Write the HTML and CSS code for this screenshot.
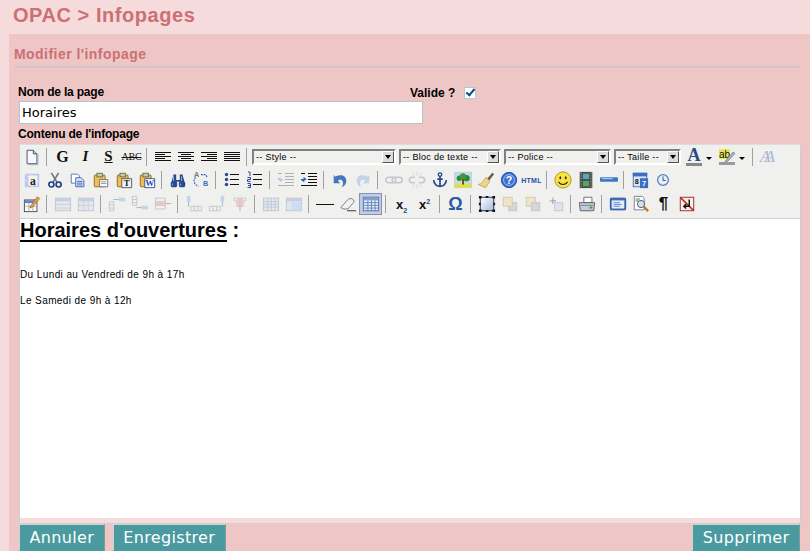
FILE: index.html
```html
<!DOCTYPE html>
<html lang="fr">
<head>
    <meta charset="UTF-8">
    <title>OPAC &gt; Infopages</title>
    <link rel="stylesheet" href="styles.css">
</head>
<body>

<svg class="defs" width="0" height="0">
    <symbol id="i-new" viewBox="0 0 20 20"><path d="M4.500 2.500h7l4 4v11h-11z" fill="#f4f7fb" stroke="#3c4a60"/><path d="M11.500 2.500v4h4" fill="#b9c8de" stroke="#3c4a60"/><path d="M16.500 7v11.500H6" fill="none" stroke="#9aa4b4"/></symbol>
    <symbol id="i-left" viewBox="0 0 20 20"><path d="M2 5.500h16M2 7.500h10M2 9.500h16M2 11.500h10M2 13.500h16" stroke="#111"/></symbol>
    <symbol id="i-center" viewBox="0 0 20 20"><path d="M2 5.500h16M5 7.500h10M2 9.500h16M5 11.500h10M2 13.500h16" stroke="#111"/></symbol>
    <symbol id="i-right" viewBox="0 0 20 20"><path d="M2 5.500h16M8 7.500h10M2 9.500h16M8 11.500h10M2 13.500h16" stroke="#111"/></symbol>
    <symbol id="i-full" viewBox="0 0 20 20"><path d="M2 5.500h16M2 7.500h16M2 9.500h16M2 11.500h16M2 13.500h16" stroke="#111"/></symbol>
    <symbol id="i-cut" viewBox="0 0 20 20"><path d="M6 2l6 10M14 2L8 12" stroke="#6e7680" stroke-width="1.800"/><circle cx="6" cy="15" r="2.800" fill="none" stroke="#1e3c8a" stroke-width="1.800"/><circle cx="14" cy="15" r="2.800" fill="none" stroke="#1e3c8a" stroke-width="1.800"/></symbol>
    <symbol id="i-copy" viewBox="0 0 20 20"><path d="M2.500 3.500h7l2 2v8h-9z" fill="#fff" stroke="#4a70b0"/><path d="M7.500 7.500h6l3 3v7h-9z" fill="#dfe9fa" stroke="#3a60a8"/><path d="M9 11.500h6M9 13.500h6M9 15.500h6" stroke="#3a60a8"/></symbol>
    <symbol id="i-paste" viewBox="0 0 20 20"><rect x="2.500" y="4.500" width="12" height="13" rx="1" fill="#eebf50" stroke="#8a6a20"/><rect x="5.500" y="2.500" width="6" height="4" fill="#c9c9b5" stroke="#6a6a50"/><path d="M8.500 9.500h9v8h-9z" fill="#fff" stroke="#667"/><path d="M10 12h6M10 14h6" stroke="#889"/></symbol>
    <symbol id="i-find" viewBox="0 0 20 20"><path d="M5 4h3v6h4V4h3l3 11h-6v-3H8v3H2z" fill="#27498f"/><rect x="2" y="12" width="7" height="6" rx="1.500" fill="#27498f"/><rect x="11" y="12" width="7" height="6" rx="1.500" fill="#27498f"/><path d="M5 6v5M14 6v5M4 14v2M13 14v2" stroke="#a8c0ec"/></symbol>
    <symbol id="i-ul" viewBox="0 0 20 20"><path d="M8 4.500h9M8 9.500h9M8 14.500h9" stroke="#111"/><circle cx="4.500" cy="4.500" r="1.700" fill="#2a4a90"/><circle cx="4.500" cy="9.500" r="1.700" fill="#2a4a90"/><circle cx="4.500" cy="14.500" r="1.700" fill="#2a4a90"/></symbol>
    <symbol id="i-ol" viewBox="0 0 20 20"><path d="M8 4.500h9M8 9.500h9M8 14.500h9" stroke="#111"/><path d="M3 2h2v4M2.500 7.500h3v2h-3v2h3M2.500 13.500h3v4h-3M3 15.500h2" fill="none" stroke="#2a4a90"/></symbol>
    <symbol id="i-outdent" viewBox="0 0 20 20"><path d="M9 3.500h9M9 6.500h9M9 9.500h9M9 12.500h9M2 15.500h16M2 3.500h4" stroke="#b0b0b0"/><path d="M7 9.500H2l2-2v4z" stroke="#b8c8e4" fill="#b8c8e4"/></symbol>
    <symbol id="i-indent" viewBox="0 0 20 20"><path d="M9 3.500h9M9 6.500h9M9 9.500h9M9 12.500h9M2 15.500h16M2 3.500h4" stroke="#111"/><path d="M2 9.500h5l-2-2v4z" stroke="#2a60c0" fill="#2a60c0"/></symbol>
    <symbol id="i-undo" viewBox="0 0 20 20"><path d="M6 5.500c6-2 11 0 11 5.500 0 3-2 5.500-5 7 2-3 2-7.500-1.500-8.500l-3 1 2.500 3H3V4.500l2 2z" fill="#4476bd"/></symbol>
    <symbol id="i-redo" viewBox="0 0 20 20"><path d="M14 5.500C8 3.500 3 5.500 3 11c0 3 2 5.500 5 7-2-3-2-7.500 1.500-8.500l3 1-2.500 3H17V4.500l-2 2z" fill="#c4d3e8"/></symbol>
    <symbol id="i-link" viewBox="0 0 20 20"><rect x="1" y="7" width="11" height="6" rx="3" fill="none" stroke="#c3c7cf" stroke-width="1.800"/><rect x="8" y="7" width="11" height="6" rx="3" fill="none" stroke="#c3c7cf" stroke-width="1.800"/></symbol>
    <symbol id="i-unlink" viewBox="0 0 20 20"><path d="M8 7H4.500a3 3 0 000 6H8M12 7h3.500a3 3 0 010 6H12" fill="none" stroke="#c3c7cf" stroke-width="1.800"/><path d="M10 1v4M10 15v4M5 2l2 3M15 2l-2 3M5 18l2-3M15 18l-2-3" stroke="#cdd0d8"/></symbol>
    <symbol id="i-anchor" viewBox="0 0 20 20"><circle cx="10" cy="4" r="2" fill="none" stroke="#234a8a" stroke-width="1.500"/><path d="M10 6v11M7 9h6M3 10c0 5 4 7 7 7s7-2 7-7" fill="none" stroke="#234a8a" stroke-width="1.900"/></symbol>
    <symbol id="i-image" viewBox="0 0 20 20"><rect x="0.500" y="1.500" width="19" height="17" fill="#bcdcf4" stroke="#ccc"/><rect x="1" y="14" width="18" height="4" fill="#e6e230"/><circle cx="6" cy="8" r="3" fill="#2f8a2f"/><circle cx="14" cy="8" r="3.500" fill="#2f8a2f"/><circle cx="10" cy="6" r="3.500" fill="#3f9a3f"/><path d="M10 9v6" stroke="#7a3a10" stroke-width="2"/></symbol>
    <symbol id="i-clean" viewBox="0 0 20 20"><path d="M11 9l6-7 2 1.500-6 7.500z" fill="#6a5a50"/><path d="M10 7l4.500 4-5 7.500-8-3.500c3.500-.5 5.500-4 8.500-8z" fill="#f0d680" stroke="#9a7f40" stroke-width=".6"/></symbol>
    <symbol id="i-smiley" viewBox="0 0 20 20"><circle cx="10" cy="10" r="9" fill="#f8e440" stroke="#a89020"/><ellipse cx="7" cy="7.500" rx="1" ry="1.700" fill="#222"/><ellipse cx="13" cy="7.500" rx="1" ry="1.700" fill="#222"/><path d="M5 12c2 4 8 4 10 0" fill="none" stroke="#222" stroke-width="1.200"/></symbol>
    <symbol id="i-film" viewBox="0 0 20 20"><rect x="3" y="1" width="14" height="18" fill="#4a4a44"/><rect x="6.500" y="3" width="7" height="6" fill="#5aa8c0"/><rect x="6.500" y="11" width="7" height="6" fill="#52a860"/><path d="M4.500 2v16M15.500 2v16" stroke="#ddd" stroke-dasharray="1 2"/></symbol>
    <symbol id="i-media" viewBox="0 0 20 20"><rect x="0" y="7" width="20" height="5" rx="1" fill="#3f78c4"/><path d="M2 8.500h12" stroke="#c8dcf6"/></symbol>
    <symbol id="i-time" viewBox="0 0 20 20"><circle cx="10" cy="10" r="6" fill="#e8eef8" stroke="#5a80b8" stroke-width="1.400"/><path d="M10 6v4.500h3" fill="none" stroke="#234a8a"/></symbol>
    <symbol id="i-edit" viewBox="0 0 20 20"><rect x="1.500" y="5.500" width="14" height="13" fill="#fff" stroke="#444"/><rect x="2" y="6" width="13" height="3" fill="#5a86c8"/><path d="M2 12.500h13M6.500 9v9M11 9v9" stroke="#aaa"/><path d="M8.500 12l7.500-10 2.500 2-8 9.500-3 1z" fill="#e8a040" stroke="#7a5020" stroke-width=".6"/></symbol>
    <symbol id="i-table-dim" viewBox="0 0 20 20"><rect x="1.500" y="3.500" width="17" height="14" fill="#e4e8ee" stroke="#bcc5d2"/><rect x="2" y="4" width="16" height="3" fill="#c4d0e2"/><path d="M2 10.500h16M2 14.500h16" stroke="#c8ced8"/></symbol>
    <symbol id="i-cell-dim" viewBox="0 0 20 20"><rect x="1.500" y="3.500" width="17" height="14" fill="#e4e8ee" stroke="#bcc5d2"/><rect x="2" y="4" width="16" height="3" fill="#c4d0e2"/><path d="M7.500 7v10M12.500 7v10M2 11.500h16" stroke="#c8ced8"/></symbol>
    <symbol id="i-row-a" viewBox="0 0 20 20"><path d="M1.500 7.500h5v10h-5zM1.500 11h5M1.500 14.500h5" fill="none" stroke="#c0c4cc"/><rect x="12" y="3" width="7" height="4" fill="#c4d4ea"/><path d="M6 5h6" stroke="#aab"/></symbol>
    <symbol id="i-row-b" viewBox="0 0 20 20"><path d="M1.500 1.500h5v10h-5zM1.500 5h5M1.500 8.500h5" fill="none" stroke="#c0c4cc"/><rect x="12" y="12" width="7" height="4" fill="#c4d4ea"/><path d="M6 14h6" stroke="#aab"/></symbol>
    <symbol id="i-row-c" viewBox="0 0 20 20"><path d="M1.500 3.500h11v12h-11zM1.500 7.500h11M1.500 11.500h11" fill="none" stroke="#c0c4cc"/><rect x="2" y="7.500" width="11" height="4" fill="#efc4c8"/><path d="M13 9.500h6" stroke="#aab"/></symbol>
    <symbol id="i-col-a" viewBox="0 0 20 20"><path d="M6.500 12.500h12v5h-12zM10.500 12.500v5M14.500 12.500v5" fill="none" stroke="#c0c4cc"/><rect x="2" y="1" width="4" height="7" fill="#c4d4ea"/><path d="M4 8v5" stroke="#aab"/></symbol>
    <symbol id="i-col-b" viewBox="0 0 20 20"><path d="M1.500 12.500h12v5h-12zM5.500 12.500v5M9.500 12.500v5" fill="none" stroke="#c0c4cc"/><rect x="14" y="1" width="4" height="7" fill="#c4d4ea"/><path d="M16 8v5" stroke="#aab"/></symbol>
    <symbol id="i-col-c" viewBox="0 0 20 20"><path d="M3.500 3.500h13v3h-3v6h-7v-6h-3z" fill="none" stroke="#c0c4cc"/><rect x="7" y="3.500" width="6" height="9" fill="#efc4c8"/><path d="M10 12v6" stroke="#aab"/></symbol>
    <symbol id="i-grid" viewBox="0 0 20 20"><rect x="1.500" y="3.500" width="17" height="14" fill="#e4e8ee" stroke="#bcc5d2"/><path d="M2 7.500h16M2 10.500h16M2 13.500h16M6.500 4v13M10.500 4v13M14.500 4v13" stroke="#c0c8d6"/></symbol>
    <symbol id="i-merge" viewBox="0 0 20 20"><rect x="1.500" y="3.500" width="17" height="14" fill="#e0e6f0" stroke="#bcc5d2"/><rect x="2" y="4" width="16" height="3" fill="#c4d0e2"/><rect x="7" y="8" width="11" height="9" fill="#cddcf2"/></symbol>
    <symbol id="i-hr" viewBox="0 0 20 20"><path d="M1 10.500h18" stroke="#111"/></symbol>
    <symbol id="i-eraser" viewBox="0 0 20 20"><path d="M2 14l8-9c1-1 3-1.500 5-.5s2 3 1 4l-6 7H5z" fill="#eef0f2" stroke="#555" stroke-width=".8"/><path d="M9 17.500h10" stroke="#222"/></symbol>
    <symbol id="i-table" viewBox="0 0 20 20"><rect x="1.500" y="2.500" width="17" height="15" fill="#e8eef8" stroke="#456fa8"/><rect x="2" y="3" width="16" height="3" fill="#7fa2d2"/><path d="M2 8.500h16M2 11.500h16M2 14.500h16M6.500 6v12M10.500 6v12M14.500 6v12" stroke="#5a82b8"/></symbol>
    <symbol id="i-box" viewBox="0 0 20 20"><rect x="2.500" y="2.500" width="15" height="15" fill="url(#boxfill)" stroke="#223"/><path d="M1 1h3v3H1zM16 1h3v3h-3zM1 16h3v3H1zM16 16h3v3h-3zM8.500 1h3v2h-3zM8.500 17h3v2h-3zM1 8.500h2v3H1zM17 8.500h2v3h-2z" fill="#112"/></symbol>
    <symbol id="i-front" viewBox="0 0 20 20"><rect x="8.500" y="8.500" width="9" height="9" fill="#d6d6d6" stroke="#c4c4c4"/><rect x="2.500" y="2.500" width="10" height="10" fill="#efe4c8" stroke="#d0c8b0"/></symbol>
    <symbol id="i-back" viewBox="0 0 20 20"><rect x="2.500" y="2.500" width="10" height="10" fill="#efe4c8" stroke="#d0c8b0"/><rect x="8.500" y="8.500" width="9" height="9" fill="#d6d6d6" stroke="#c4c4c4"/></symbol>
    <symbol id="i-move" viewBox="0 0 20 20"><rect x="8.500" y="8.500" width="9" height="9" fill="#dbe4f0" stroke="#bcc8d8"/><path d="M6.500 3v7M3 6.500h7" stroke="#999"/></symbol>
    <symbol id="i-print" viewBox="0 0 20 20"><path d="M6.500 2.500h9v6h-9z" fill="#fff" stroke="#667"/><path d="M1.500 8.500h17l-1 9h-15z" fill="#c4ccd8" stroke="#556"/><path d="M3 11.500h14" stroke="#778"/><rect x="13" y="13" width="3" height="2" fill="#2a9a3a"/></symbol>
    <symbol id="i-layer" viewBox="0 0 20 20"><rect x="1.500" y="3.500" width="17" height="13" rx="1" fill="#3a6fc0" stroke="#1f4a90"/><rect x="3" y="6" width="14" height="9" fill="#e4eefa"/><path d="M5 8.500h7M5 10.500h9M5 12.500h7" stroke="#5a86c8"/></symbol>
    <symbol id="i-preview" viewBox="0 0 20 20"><path d="M2.500 1.500h9l2 2v13h-11z" fill="#fff" stroke="#778"/><path d="M4 4.500h5M4 6.500h3" stroke="#3a8a3a"/><circle cx="10" cy="10" r="4" fill="#cfe0f4" stroke="#456"/><path d="M13 13l5 5" stroke="#c07820" stroke-width="2.600"/></symbol>
    <symbol id="i-noedit" viewBox="0 0 20 20"><rect x="2.500" y="2.500" width="15" height="15" fill="#f8f0e8" stroke="#a02020"/><path d="M3 3l14 14" stroke="#c82020" stroke-width="1.800"/><path d="M12.500 5v7.500H7M9 10l-2.500 2.500L9 15" fill="none" stroke="#111" stroke-width="1.600"/></symbol>
    <linearGradient id="boxfill" x2="1" y2="1"><stop offset="0" stop-color="#fff"/><stop offset="1" stop-color="#a4b8dc"/></linearGradient>
</svg>

<h1 class="page-title">OPAC &gt; Infopages</h1>

<form class="panel">
    <h3 class="panel-title">Modifier l'infopage</h3>

    <div class="form-top">
        <div class="field-name">
            <label class="lbl tight" for="nom">Nom de la page</label>
            <input type="text" id="nom" class="txt" value="Horaires">
        </div>
        <div class="field-valid">
            <label class="lbl" for="valide">Valide ?</label>
            <input type="checkbox" id="valide" class="chk" checked>
        </div>
    </div>

    <label class="lbl tight lbl-content">Contenu de l'infopage</label>

    <div class="editor">
        <div class="toolbar">
            <div class="row row-first">
                <span class="btn"><svg><use href="#i-new"/></svg></span>
                <span class="sep"></span>
                <span class="btn glyph g-bold">G</span>
                <span class="btn glyph g-ital">I</span>
                <span class="btn glyph g-under">S</span>
                <span class="btn glyph g-strike">ABC</span>
                <span class="sep"></span>
                <span class="btn"><svg class="full"><use href="#i-left"/></svg></span>
                <span class="btn"><svg class="full"><use href="#i-center"/></svg></span>
                <span class="btn"><svg class="full"><use href="#i-right"/></svg></span>
                <span class="btn"><svg class="full"><use href="#i-full"/></svg></span>
                <span class="sep"></span>
                <div class="sel sel-style"><select><option>-- Style --</option></select><i class="arrow"></i></div>
                <div class="sel sel-block"><select><option>-- Bloc de texte --</option></select><i class="arrow"></i></div>
                <div class="sel sel-font"><select><option>-- Police --</option></select><i class="arrow"></i></div>
                <div class="sel sel-size"><select><option>-- Taille --</option></select><i class="arrow"></i></div>
                <span class="btn split"><span class="color-a">A</span></span><i class="drop"></i>
                <span class="btn split">
                    <svg class="full" viewBox="0 0 20 20"><rect x="2" y="2" width="11" height="10" fill="#e6e65a"/><text x="7.500" y="10.500" class="svg-sans ab">ab</text><path d="M9 13l7-8 2 1.500-7 7.500-3 1z" fill="#a8b4c4" stroke="#556" stroke-width=".5"/><rect x="2" y="15" width="16" height="3" fill="#999"/></svg>
                </span><i class="drop"></i>
                <span class="sep"></span>
                <span class="btn glyph g-aa">AA</span>
            </div>
            <div class="row">
                <span class="btn">
                    <svg viewBox="0 0 20 20"><rect x="2" y="3" width="16" height="15" fill="#b9c8ee"/><path d="M2 3l15 15M2 9l9 9M8 3l10 10" stroke="#fff" stroke-dasharray="1 1"/><rect x="6" y="5" width="10" height="11" fill="#f4f4f4"/><text x="11" y="15" class="svg-serif">a</text></svg>
                </span>
                <span class="btn"><svg><use href="#i-cut"/></svg></span>
                <span class="btn"><svg><use href="#i-copy"/></svg></span>
                <span class="btn"><svg><use href="#i-paste"/></svg></span>
                <span class="btn">
                    <svg viewBox="0 0 20 20"><use href="#i-paste"/><path d="M7.500 8.500h11v10h-11z" fill="#f2f2f2" stroke="#556"/><text x="13" y="17" class="svg-serif small">T</text></svg>
                </span>
                <span class="btn">
                    <svg viewBox="0 0 20 20"><use href="#i-paste"/><path d="M7.500 8.500h11v10h-11z" fill="#fff" stroke="#2a50a0"/><text x="13" y="17" class="svg-serif small blue">W</text></svg>
                </span>
                <span class="sep"></span>
                <span class="btn"><svg><use href="#i-find"/></svg></span>
                <span class="btn">
                    <svg viewBox="0 0 20 20"><path d="M4 7c-3 3-2 8 3 10" fill="none" stroke="#2a60c0" stroke-dasharray="2 1" stroke-width="1.300"/><path d="M10 4h5l2 3" fill="none" stroke="#2a60c0" stroke-dasharray="2 1" stroke-width="1.300"/><text x="5" y="7" class="svg-sans tiny grey">A</text><text x="15" y="17" class="svg-sans tiny blue">B</text></svg>
                </span>
                <span class="sep"></span>
                <span class="btn"><svg class="full"><use href="#i-ul"/></svg></span>
                <span class="btn"><svg class="full"><use href="#i-ol"/></svg></span>
                <span class="sep"></span>
                <span class="btn"><svg class="full"><use href="#i-outdent"/></svg></span>
                <span class="btn"><svg class="full"><use href="#i-indent"/></svg></span>
                <span class="sep"></span>
                <span class="btn"><svg><use href="#i-undo"/></svg></span>
                <span class="btn"><svg><use href="#i-redo"/></svg></span>
                <span class="sep"></span>
                <span class="btn"><svg><use href="#i-link"/></svg></span>
                <span class="btn"><svg><use href="#i-unlink"/></svg></span>
                <span class="btn"><svg><use href="#i-anchor"/></svg></span>
                <span class="btn"><svg><use href="#i-image"/></svg></span>
                <span class="btn"><svg><use href="#i-clean"/></svg></span>
                <span class="btn">
                    <svg viewBox="0 0 20 20"><circle cx="10" cy="10" r="8.500" fill="#3a6fd0" stroke="#1f4aa0"/><circle cx="10" cy="10" r="6" fill="none" stroke="#a8c6f6"/><text x="10" y="14" class="svg-sans qmark">?</text></svg>
                </span>
                <span class="btn glyph g-html">HTML</span>
                <span class="sep"></span>
                <span class="btn"><svg><use href="#i-smiley"/></svg></span>
                <span class="btn"><svg><use href="#i-film"/></svg></span>
                <span class="btn"><svg><use href="#i-media"/></svg></span>
                <span class="sep"></span>
                <span class="btn">
                    <svg viewBox="0 0 20 20"><rect x="2.500" y="2.500" width="15" height="15" fill="#dfe6f2" stroke="#3a70c0"/><rect x="2" y="2" width="16" height="4" fill="#3a70c0"/><rect x="10" y="8" width="9" height="11" fill="#3a70c0"/><text x="6.500" y="14" class="svg-sans mini">8</text><text x="14.500" y="17" class="svg-sans mini white">7</text></svg>
                </span>
                <span class="btn"><svg><use href="#i-time"/></svg></span>
            </div>
            <div class="row">
                <span class="btn"><svg><use href="#i-edit"/></svg></span>
                <span class="sep"></span>
                <span class="btn"><svg><use href="#i-table-dim"/></svg></span>
                <span class="btn"><svg><use href="#i-cell-dim"/></svg></span>
                <span class="sep"></span>
                <span class="btn"><svg><use href="#i-row-a"/></svg></span>
                <span class="btn"><svg><use href="#i-row-b"/></svg></span>
                <span class="btn"><svg><use href="#i-row-c"/></svg></span>
                <span class="sep"></span>
                <span class="btn"><svg><use href="#i-col-a"/></svg></span>
                <span class="btn"><svg><use href="#i-col-b"/></svg></span>
                <span class="btn"><svg><use href="#i-col-c"/></svg></span>
                <span class="sep"></span>
                <span class="btn"><svg><use href="#i-grid"/></svg></span>
                <span class="btn"><svg><use href="#i-merge"/></svg></span>
                <span class="sep"></span>
                <span class="btn"><svg class="full"><use href="#i-hr"/></svg></span>
                <span class="btn"><svg><use href="#i-eraser"/></svg></span>
                <span class="btn active"><svg><use href="#i-table"/></svg></span>
                <span class="sep"></span>
                <span class="btn glyph g-script"><span>x<sub>2</sub></span></span>
                <span class="btn glyph g-script"><span>x<sup>2</sup></span></span>
                <span class="sep"></span>
                <span class="btn glyph g-omega">Ω</span>
                <span class="sep"></span>
                <span class="btn"><svg><use href="#i-box"/></svg></span>
                <span class="btn"><svg><use href="#i-front"/></svg></span>
                <span class="btn"><svg><use href="#i-back"/></svg></span>
                <span class="btn"><svg><use href="#i-move"/></svg></span>
                <span class="sep"></span>
                <span class="btn"><svg><use href="#i-print"/></svg></span>
                <span class="sep"></span>
                <span class="btn"><svg><use href="#i-layer"/></svg></span>
                <span class="btn"><svg><use href="#i-preview"/></svg></span>
                <span class="btn glyph g-para">¶</span>
                <span class="btn"><svg><use href="#i-noedit"/></svg></span>
            </div>
        </div>
        <div class="content">
            <h2 class="content-title"><u>Horaires d'ouvertures</u> :</h2>
            <p>Du Lundi au Vendredi de 9h à 17h</p>
            <p>Le Samedi de 9h à 12h</p>
        </div>
        <div class="statusbar"></div>
    </div>

    <div class="actions">
        <div class="actions-left">
            <button type="button" class="bouton">Annuler</button>
            <button type="button" class="bouton">Enregistrer</button>
        </div>
        <button type="button" class="bouton">Supprimer</button>
    </div>
</form>

</body>
</html>
```
FILE: styles.css
```css
html, body {
    height: 100%;
}
body {
    margin: 0;
    background: #f6dbdc;
    font-family: "Liberation Sans", sans-serif;
    color: #000;
    overflow: hidden;
}
.defs {
    display: block;
    height: 0;
}
.page-title {
    margin: 0;
    height: 34px;
    padding: 3px 0 0 13px;
    box-sizing: border-box;
    font-size: 20px;
    line-height: 24px;
    font-weight: bold;
    letter-spacing: .55px;
    color: #cc7073;
}
.panel {
    margin-left: 9px;
    height: 517px;
    padding: 12px 10px 0 10px;
    box-sizing: border-box;
    background: #eec6c6;
    overflow: hidden;
}
.panel-title {
    margin: 0 0 0 -5px;
    padding-bottom: 4px;
    border-bottom: 2px solid #cfc8c8;
    font-size: 14px;
    line-height: 16px;
    font-weight: bold;
    letter-spacing: .45px;
    color: #cc7073;
}
.form-top {
    display: flex;
    margin-top: 17px;
}
.field-name {
    width: 404px;
}
.field-valid {
    display: flex;
    align-items: center;
    gap: 9px;
    height: 14px;
    margin-left: -13px;
    margin-top: 1px;
}
.lbl {
    display: block;
    font-size: 12px;
    line-height: 15px;
    font-weight: bold;
    color: #000;
}
.lbl.tight {
    margin-left: -1px;
    letter-spacing: -.2px;
}
.txt {
    display: block;
    width: 100%;
    height: 23px;
    box-sizing: border-box;
    margin: 1px 0 0;
    padding: 0 2px;
    border: 1px solid #b4c6cc;
    background: #fff;
    font-family: "DejaVu Sans", sans-serif;
    font-size: 13px;
    color: #000;
}
.chk {
    display: flex;
    align-items: center;
    justify-content: center;
    appearance: none;
    margin: 0;
    width: 12px;
    height: 12px;
    box-sizing: border-box;
    border: 1px solid #b8c8d0;
    background: #fff;
}
.chk:checked::after {
    content: "";
    width: 7px;
    height: 3px;
    margin-top: -3px;
    border-left: 2px solid #0c4a80;
    border-bottom: 2px solid #0c4a80;
    transform: rotate(-50deg);
}
.lbl-content {
    margin-top: 3px;
}
.editor {
    width: 782px;
    margin-top: 2px;
    box-sizing: border-box;
    border: 1px solid #cfcfcf;
    border-top-color: #dcdcdc;
}
.toolbar {
    height: 73px;
    background: #f0f0ee;
    box-sizing: border-box;
}
.row {
    display: flex;
    align-items: center;
    height: 24px;
}
.row-first {
    height: 23px;
}
.btn {
    display: flex;
    align-items: center;
    justify-content: center;
    flex: none;
    width: 23px;
    height: 22px;
    box-sizing: border-box;
}
.btn svg {
    width: 18px;
    height: 18px;
}
.btn svg.full {
    width: 20px;
    height: 20px;
}
.btn.active {
    background: #c2cbe0;
    border: 1px solid #8592b5;
}
.sep {
    flex: none;
    width: 1px;
    height: 18px;
    margin: 0 4px 0 3px;
    background: #a0a0a0;
}
.glyph {
    font-family: "Liberation Serif", serif;
    color: #111;
}
.g-bold {
    font-size: 16px;
    font-weight: bold;
}
.g-ital {
    font-size: 15px;
    font-weight: bold;
    font-style: italic;
}
.g-under {
    font-size: 15px;
    font-weight: bold;
    text-decoration: underline;
}
.g-strike {
    font-size: 10px;
    letter-spacing: -.2px;
    text-decoration: line-through;
}
.g-html {
    font-family: "Liberation Sans", sans-serif;
    font-size: 7px;
    font-weight: bold;
    letter-spacing: .3px;
    color: #2a50a8;
}
.g-aa {
    margin-left: -1px;
    font-size: 17px;
    font-style: italic;
    letter-spacing: -6px;
    padding-right: 6px;
    color: #aab4d2;
}
.g-script {
    font-family: "Liberation Sans", sans-serif;
    font-size: 13px;
    font-weight: bold;
}
.g-script sub, .g-script sup {
    font-size: 7px;
    line-height: 0;
    color: #234a8a;
}
.g-omega {
    font-family: "Liberation Sans", sans-serif;
    font-size: 18px;
    font-weight: bold;
    color: #2a5aa8;
}
.g-para {
    font-family: "Liberation Sans", sans-serif;
    font-size: 17px;
    font-weight: bold;
}
.svg-serif {
    font-family: "Liberation Serif", serif;
    font-size: 13px;
    font-weight: bold;
    text-anchor: middle;
    fill: #222;
}
.svg-serif.small {
    font-size: 10px;
}
.svg-serif.blue {
    fill: #2a50a0;
}
.svg-sans {
    font-family: "Liberation Sans", sans-serif;
    font-weight: bold;
    text-anchor: middle;
    fill: #111;
}
.svg-sans.tiny {
    font-size: 8px;
}
.svg-sans.grey {
    fill: #778;
}
.svg-sans.blue {
    fill: #3a6fc0;
}
.svg-sans.qmark {
    font-size: 12px;
    fill: #fff;
}
.svg-sans.mini {
    font-size: 8px;
}
.svg-sans.white {
    fill: #fff;
}
.svg-sans.ab {
    font-size: 10px;
    font-weight: normal;
}
.sel {
    display: flex;
    flex: none;
    height: 16px;
    box-sizing: border-box;
    margin-right: 3px;
    border: 2px solid;
    border-color: #808080 #fff #fff #808080;
    background: #f0f0ee;
}
.sel-style {
    margin-left: 1px;
    width: 144px;
}
.sel-block { width: 102px; }
.sel-font { width: 107px; }
.sel-size { width: 67px; }
.sel select {
    flex: 1;
    min-width: 0;
    appearance: none;
    border: 0;
    padding: 0 0 0 2px;
    background: transparent;
    font-family: "Liberation Sans", sans-serif;
    font-size: 9px;
    letter-spacing: .3px;
    color: #000;
}
.arrow {
    display: flex;
    align-items: center;
    justify-content: center;
    flex: none;
    width: 12px;
    box-sizing: border-box;
    background: #dcdcdc;
    border: 1px solid;
    border-color: #fff #555 #555 #fff;
}
.arrow::after {
    content: "";
    border: 3px solid transparent;
    border-top: 4px solid #000;
    border-bottom: 0;
}
.split {
    width: 20px;
    flex-direction: column;
}
.color-a {
    width: 16px;
    text-align: center;
    font-size: 18px;
    line-height: 15px;
    font-weight: bold;
    font-family: "Liberation Serif", serif;
    color: #2a4a8a;
    border-bottom: 3px solid #888;
}
.drop {
    flex: none;
    width: 0;
    margin: 3px 5px 0 2px;
    border: 3px solid transparent;
    border-top: 3px solid #000;
    border-bottom: 0;
}
.drop + .btn + .drop {
    margin-right: 4px;
}
.content {
    height: 300px;
    background: #fff;
    border-top: 1px solid #cfcfcf;
    box-sizing: border-box;
    overflow: hidden;
}
.content-title {
    margin: 0;
    font-family: "Liberation Sans", sans-serif;
    font-size: 20px;
    line-height: 23px;
    font-weight: bold;
}
.content-title u {
    text-decoration-thickness: 2px;
    text-underline-offset: 3px;
}
.content p {
    margin: 0;
    padding-top: 15px;
    line-height: 11px;
    font-family: "Liberation Sans", sans-serif;
    font-size: 10px;
    letter-spacing: .4px;
}
.content-title + p {
    padding-top: 27px;
}
.statusbar {
    height: 5px;
    background: #f6dbdc;
}
.actions {
    display: flex;
    justify-content: space-between;
    width: 781px;
}
.actions-left {
    display: flex;
    gap: 8px;
}
.bouton {
    height: 27px;
    padding: 0 9.5px;
    border: 1px solid;
    border-color: #c9d6d6 #7f9c9c #4a9a9f #c9d6d6;
    background: #4a9a9f;
    font-family: "DejaVu Sans", sans-serif;
    font-size: 16px;
    letter-spacing: .35px;
    color: #fff;
}
```
